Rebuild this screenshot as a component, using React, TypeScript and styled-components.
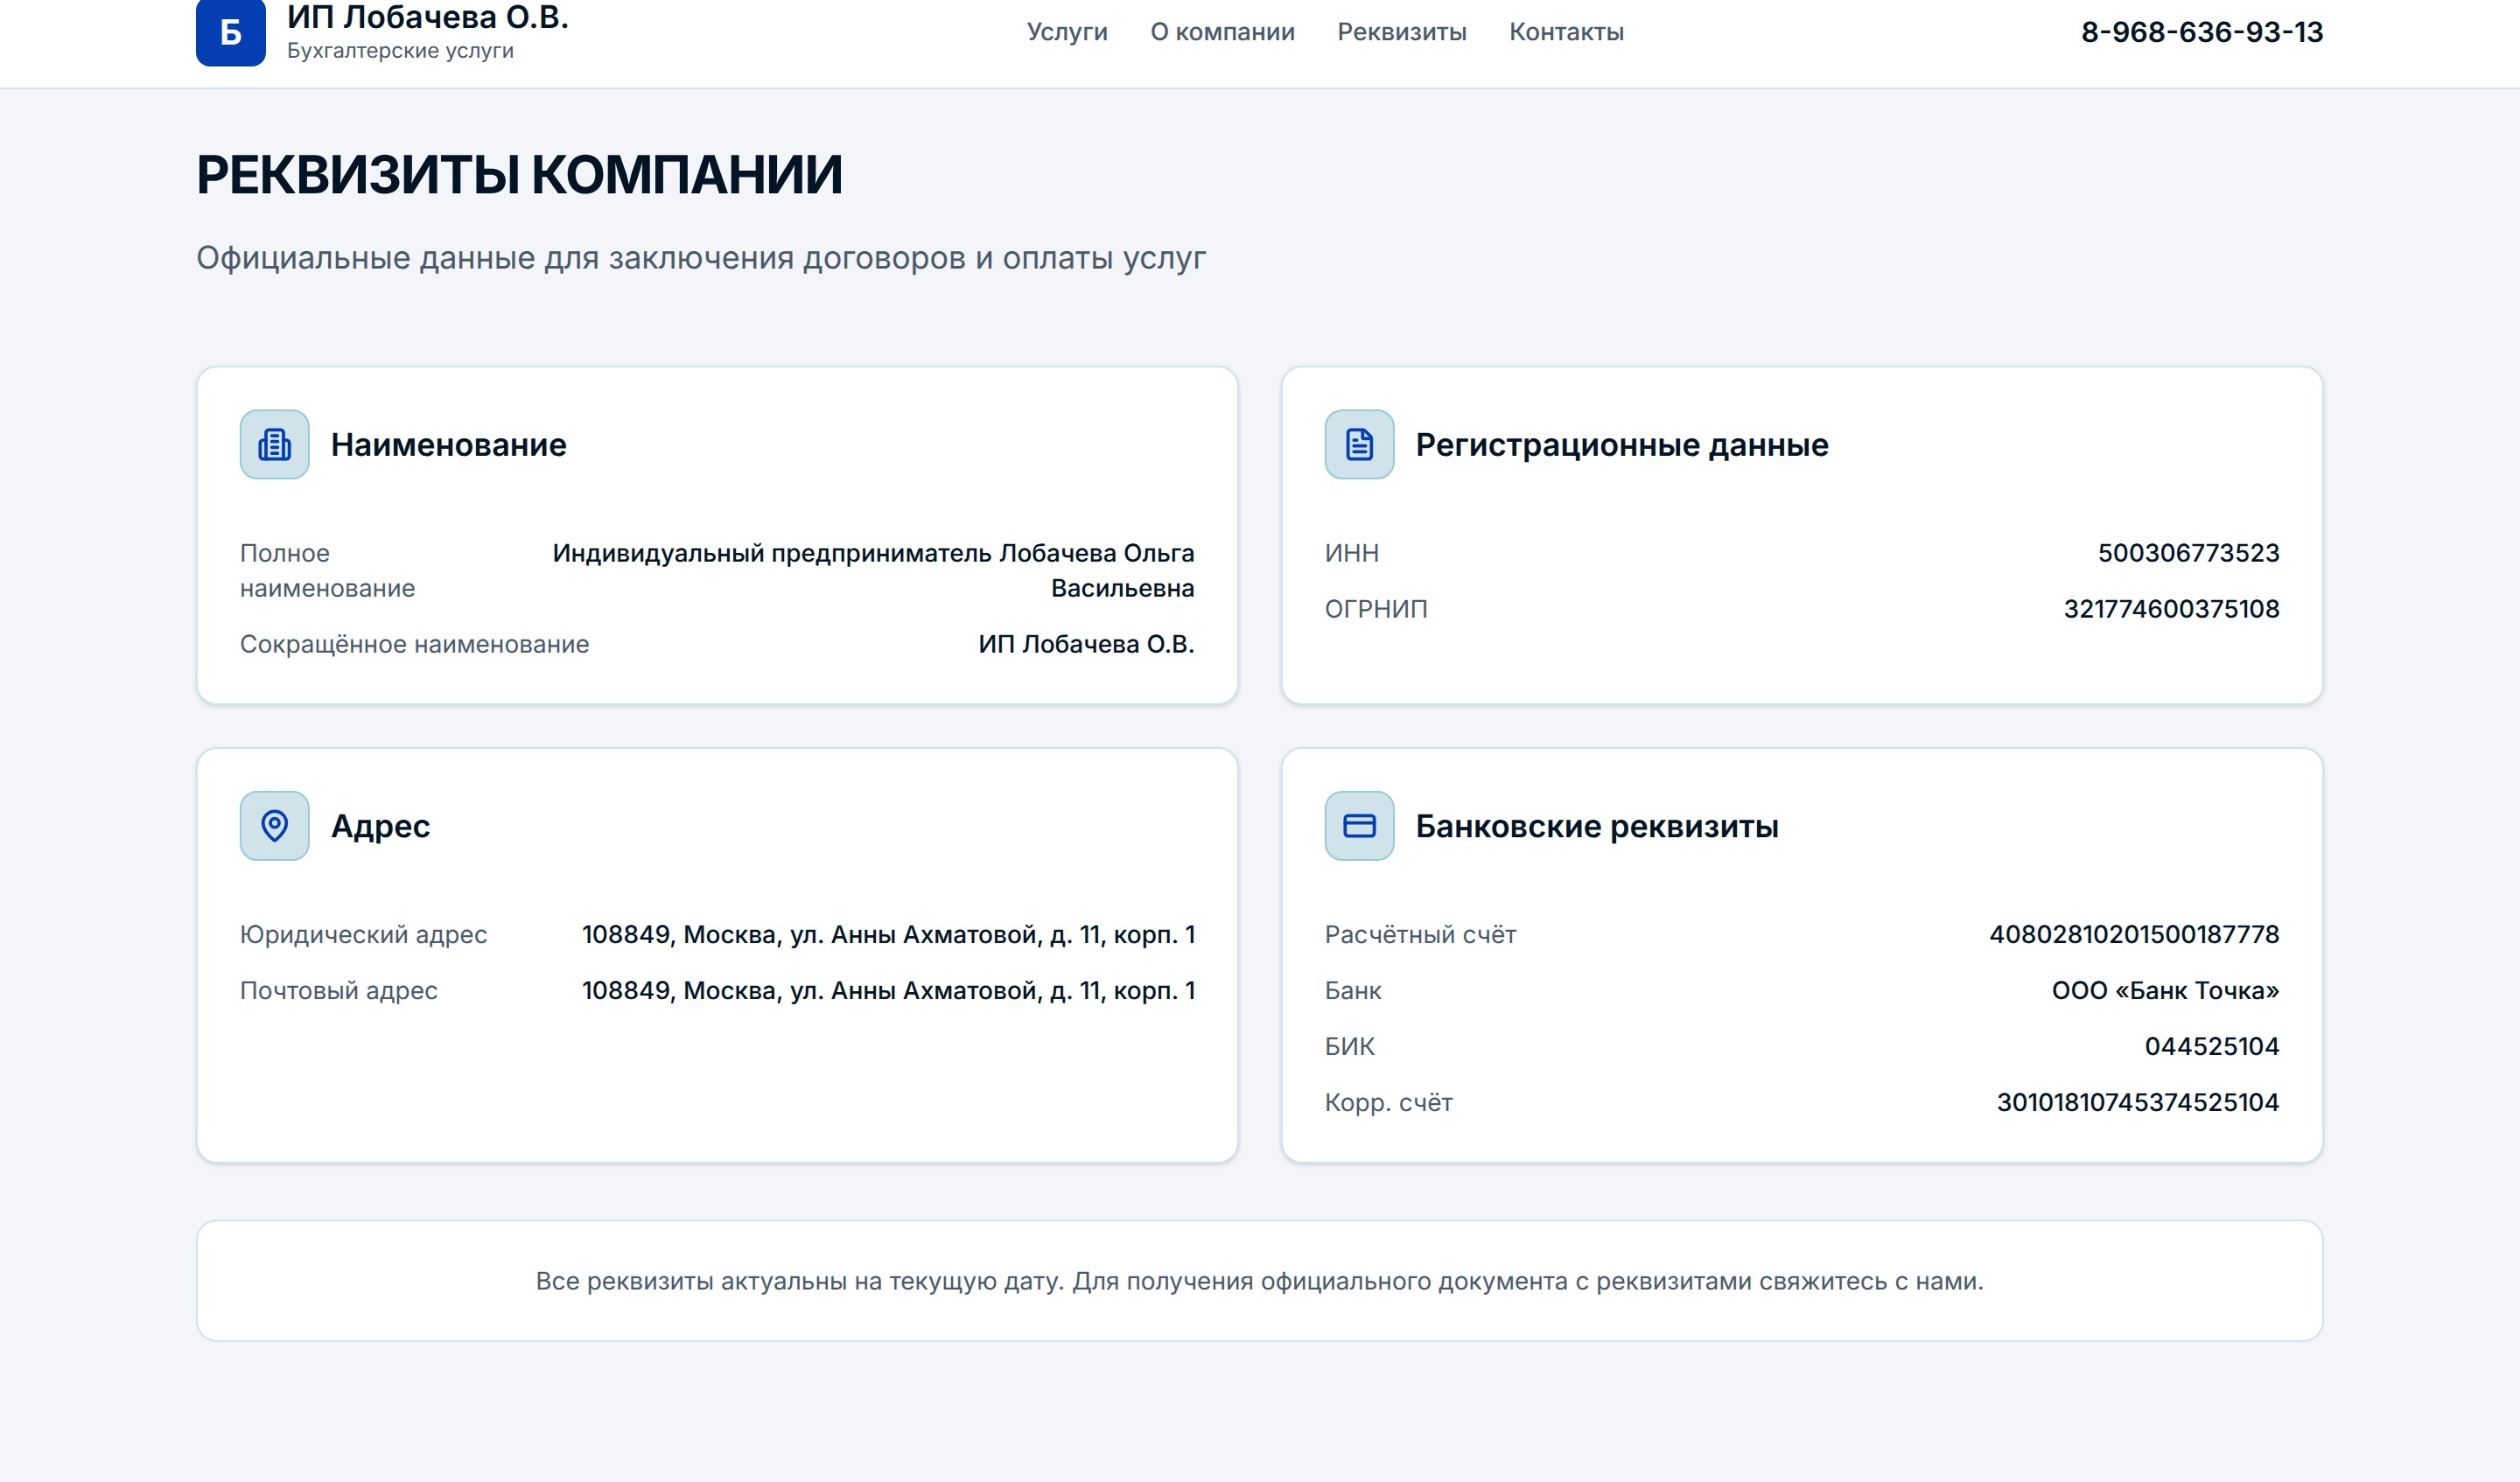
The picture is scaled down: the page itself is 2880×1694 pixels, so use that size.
import React from "react";
import styled, { createGlobalStyle } from "styled-components";
import { FileText, MapPin, CreditCard } from "lucide-react";

const Global = createGlobalStyle`
  html, body { margin: 0; padding: 0; background: #f3f5f9; }
  body {
    font-family: Inter, "Noto Sans", sans-serif;
    color: #031525;
    -webkit-font-smoothing: antialiased;
    text-rendering: geometricPrecision;
  }
  * { box-sizing: border-box; }
`;

const Page = styled.div`
  min-height: 1694px;
  background: #f3f5f9;
  overflow: hidden;
`;

const Header = styled.header`
  height: 102px;
  background: #fff;
  border-bottom: 2px solid #d0e3ea;
`;

const HeaderInner = styled.div`
  width: 2560px;
  margin: 0 auto;
  padding: 0 64px;
  height: 76px;
  display: flex;
  align-items: flex-end;
  justify-content: space-between;
`;

const Brand = styled.div`
  display: flex;
  align-items: center;
  gap: 24px;
  height: 80px;
  flex: none;
`;

const LogoMark = styled.div`
  width: 80px;
  height: 80px;
  border-radius: 16px;
  background: #033fb3;
  color: #fff;
  font-weight: 700;
  font-size: 40px;
  display: flex;
  align-items: center;
  justify-content: center;
`;

const BrandText = styled.div`
  display: flex;
  flex-direction: column;
`;

const BrandName = styled.div`
  font-size: 36px;
  line-height: 40px;
  font-weight: 600;
  letter-spacing: 0.2px;
  color: #031525;
`;

const BrandSub = styled.div`
  font-size: 24px;
  line-height: 32px;
  margin-top: 3px;
  color: #4b5a6b;
`;

const Nav = styled.nav`
  display: flex;
  gap: 48px;
  height: 80px;
  align-items: center;
`;

const NavLink = styled.a`
  font-size: 28px;
  line-height: 40px;
  font-weight: 500;
  color: #4b5a6b;
`;

const Phone = styled.div`
  font-size: 32px;
  font-weight: 600;
  height: 80px;
  display: flex;
  align-items: center;
  color: #031525;
`;

const Main = styled.main`
  width: 2560px;
  margin: 0 auto;
  padding: 62px 64px 0;
`;

const Title = styled.h1`
  margin: 0;
  font-size: 60px;
  line-height: 72px;
  font-weight: 700;
  letter-spacing: -1.5px;
  color: #031525;
`;

const Subtitle = styled.p`
  margin: 30px 0 0;
  font-size: 36px;
  line-height: 56px;
  letter-spacing: -0.06px;
  color: #4b5a6b;
`;

const Grid = styled.div`
  display: grid;
  grid-template-columns: 1fr 1fr;
  gap: 48px;
  margin-top: 96px;
`;

const Card = styled.section`
  background: #fff;
  border: 2px solid #d0e3ea;
  border-radius: 24px;
  padding: 48px;
  box-shadow: 0 2px 6px rgba(0, 0, 0, 0.1), 0 2px 4px -2px rgba(0, 0, 0, 0.1);
`;

const CardHead = styled.div`
  display: flex;
  align-items: center;
  gap: 24px;
  margin-bottom: 64px;
`;

const IconBox = styled.div`
  width: 80px;
  height: 80px;
  border-radius: 20px;
  border: 2px solid #96cbd8;
  background: #d0e3ea;
  color: #033fb3;
  display: flex;
  align-items: center;
  justify-content: center;
`;

const CardTitle = styled.h2`
  margin: 0;
  font-size: 36px;
  line-height: 56px;
  font-weight: 600;
  color: #031525;
`;

const Rows = styled.div`
  display: flex;
  flex-direction: column;
  gap: 24px;
`;

const Row = styled.div`
  display: flex;
  justify-content: space-between;
  gap: 48px;
`;

const Label = styled.div`
  font-size: 28px;
  line-height: 40px;
  color: #4b5a6b;
`;

const Value = styled.div`
  font-size: 28px;
  line-height: 40px;
  font-weight: 500;
  color: #031525;
  text-align: right;
`;

const Note = styled.div`
  margin-top: 64px;
  background: #fff;
  border: 2px solid #d0e3ea;
  border-radius: 24px;
  padding: 48px;
  text-align: center;
  font-size: 28px;
  line-height: 40px;
  color: #4b5a6b;
`;

const BuildingIcon = () => (
  <svg width="40" height="40" viewBox="0 0 24 24" fill="none" stroke="currentColor" strokeWidth="2.25" strokeLinecap="round" strokeLinejoin="round">
    <path d="M6 22V4a2 2 0 0 1 2-2h8a2 2 0 0 1 2 2v18Z" />
    <path d="M6 9H4a2 2 0 0 0-2 2v9a2 2 0 0 0 2 2h2" />
    <path d="M18 9h2a2 2 0 0 1 2 2v9a2 2 0 0 1-2 2h-2" />
    <path d="M10 6h4M10 10h4M10 14h4M10 18h4" />
  </svg>
);

type Item = { label: React.ReactNode; value: React.ReactNode };

const InfoCard: React.FC<{ icon: React.ReactNode; title: string; items: Item[] }> = ({ icon, title, items }) => (
  <Card>
    <CardHead>
      <IconBox>{icon}</IconBox>
      <CardTitle>{title}</CardTitle>
    </CardHead>
    <Rows>
      {items.map((it, i) => (
        <Row key={i}>
          <Label>{it.label}</Label>
          <Value>{it.value}</Value>
        </Row>
      ))}
    </Rows>
  </Card>
);

export default function App() {
  return (
    <Page>
      <Global />
      <Header>
        <HeaderInner>
          <Brand>
            <LogoMark>Б</LogoMark>
            <BrandText>
              <BrandName>ИП Лобачева О.В.</BrandName>
              <BrandSub>Бухгалтерские услуги</BrandSub>
            </BrandText>
          </Brand>
          <Nav>
            <NavLink>Услуги</NavLink>
            <NavLink>О компании</NavLink>
            <NavLink>Реквизиты</NavLink>
            <NavLink>Контакты</NavLink>
          </Nav>
          <Phone>8-968-636-93-13</Phone>
        </HeaderInner>
      </Header>
      <Main>
        <Title>РЕКВИЗИТЫ КОМПАНИИ</Title>
        <Subtitle>Официальные данные для заключения договоров и оплаты услуг</Subtitle>
        <Grid>
          <InfoCard
            icon={<BuildingIcon />}
            title="Наименование"
            items={[
              { label: <>Полное<br />наименование</>, value: "Индивидуальный предприниматель Лобачева Ольга Васильевна" },
              { label: "Сокращённое наименование", value: "ИП Лобачева О.В." },
            ]}
          />
          <InfoCard
            icon={<FileText size={40} strokeWidth={2.25} />}
            title="Регистрационные данные"
            items={[
              { label: "ИНН", value: "500306773523" },
              { label: "ОГРНИП", value: "321774600375108" },
            ]}
          />
          <InfoCard
            icon={<MapPin size={40} strokeWidth={2.25} />}
            title="Адрес"
            items={[
              { label: "Юридический адрес", value: "108849, Москва, ул. Анны Ахматовой, д. 11, корп. 1" },
              { label: "Почтовый адрес", value: "108849, Москва, ул. Анны Ахматовой, д. 11, корп. 1" },
            ]}
          />
          <InfoCard
            icon={<CreditCard size={40} strokeWidth={2.25} />}
            title="Банковские реквизиты"
            items={[
              { label: "Расчётный счёт", value: "40802810201500187778" },
              { label: "Банк", value: "ООО «Банк Точка»" },
              { label: "БИК", value: "044525104" },
              { label: "Корр. счёт", value: "30101810745374525104" },
            ]}
          />
        </Grid>
        <Note>Все реквизиты актуальны на текущую дату. Для получения официального документа с реквизитами свяжитесь с нами.</Note>
      </Main>
    </Page>
  );
}
